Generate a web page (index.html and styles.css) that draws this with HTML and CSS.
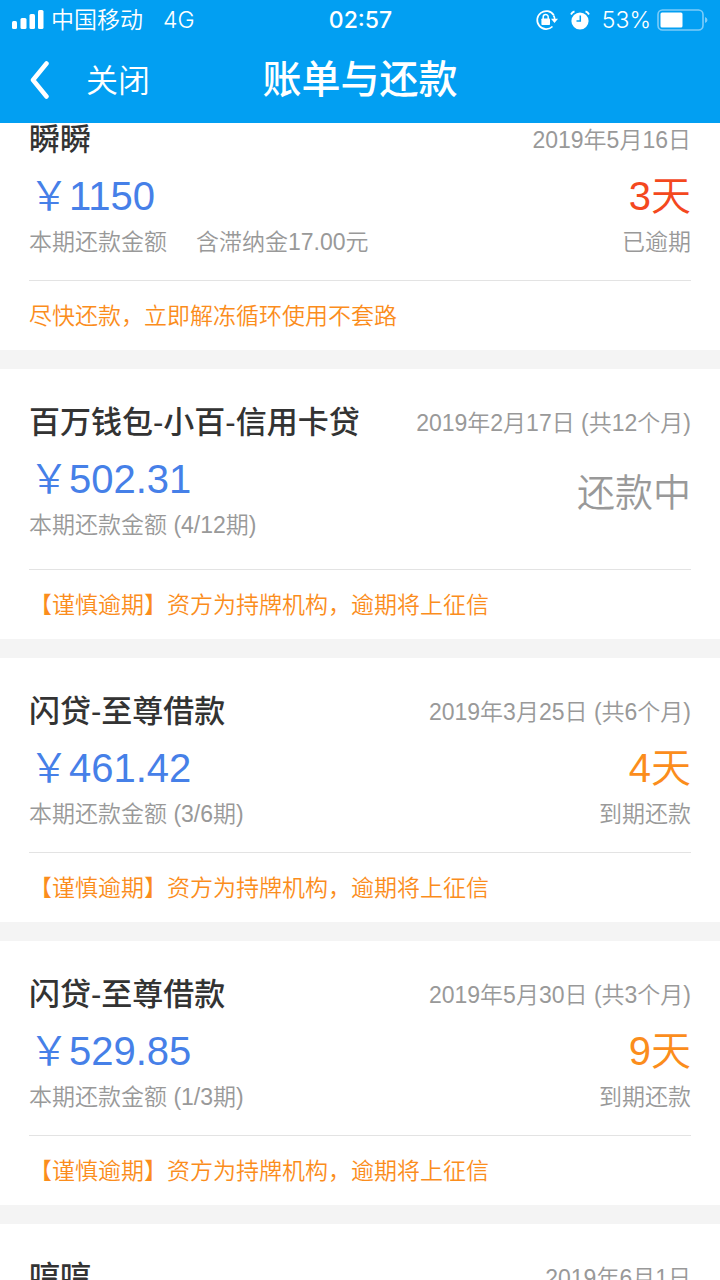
FILE: index.html
```html
<!DOCTYPE html>
<html lang="zh-CN">
<head>
  <meta charset="utf-8">
  <meta name="viewport" content="width=device-width, initial-scale=1">
  <title>账单与还款</title>
  <link rel="stylesheet" href="styles.css">
</head>
<body>
  <header class="header">
    <div class="status">
      <div class="status-left">
        <svg class="signal" viewBox="0 0 32 20" aria-hidden="true">
          <rect x="0" y="11" width="5" height="8" rx="1.5"/>
          <rect x="8.5" y="8" width="6" height="11" rx="1.5"/>
          <rect x="17.5" y="4" width="5.5" height="15" rx="1.5"/>
          <rect x="26" y="0" width="5.5" height="19" rx="1.5"/>
        </svg>
        <span class="carrier">中国移动</span>
        <span class="network">4G</span>
      </div>
      <time class="clock">02:57</time>
      <div class="status-right">
        <svg class="lock" viewBox="0 0 24 22" aria-hidden="true">
          <path d="M18.8 6.200A9 9 0 1 0 17.500 17.500" fill="none" stroke="#fff" stroke-width="1.700"/>
          <path d="M18.500 6.500Q20 8.500 19.700 11" fill="none" stroke="#fff" stroke-width="1.700"/>
          <path d="M16 9.800h7l-3.500 4.200z"/>
          <rect x="6.400" y="9.400" width="8.600" height="6.600" rx="0.800"/>
          <path d="M8.200 10V8a2.500 2.500 0 0 1 5 0v2" fill="none" stroke="#fff" stroke-width="1.500"/>
        </svg>
        <svg class="alarm" viewBox="0 0 20 20" aria-hidden="true">
          <circle cx="10" cy="11" r="8.600"/>
          <path d="M10.300 5.500v5.500H6.500" fill="none" stroke="#029ff2" stroke-width="1.500"/>
          <path d="M1 4.500A6 6 0 0 1 4.500 1.400M19 4.500A6 6 0 0 0 15.500 1.400" fill="none" stroke="#fff" stroke-width="1.800"/>
        </svg>
        <span class="percent">53%</span>
        <svg class="battery" viewBox="0 0 52 22" aria-hidden="true">
          <rect x="1" y="1" width="45" height="20" rx="4.500" fill="none" stroke="#7cccf9" stroke-width="1.600"/>
          <rect x="3.500" y="3.500" width="22" height="15" rx="1.500"/>
          <path d="M48 8v6q2.500-1 2.500-3T48 8z" fill="#7cccf9"/>
        </svg>
      </div>
    </div>
    <nav class="nav">
      <div class="nav-left">
        <button class="back" type="button" aria-label="返回">
          <svg viewBox="0 0 20 40" aria-hidden="true"><path d="M17.500 3.500 4 20l13.500 16.500" fill="none" stroke="#fff" stroke-width="4.500" stroke-linecap="round" stroke-linejoin="round"/></svg>
        </button>
        <button class="close" type="button">关闭</button>
      </div>
      <h1 class="title">账单与还款</h1>
    </nav>
  </header>

  <main class="bills">
    <article class="bill">
      <div class="head"><h2 class="name">瞬瞬</h2><time class="date">2019年5月16日</time></div>
      <div class="body">
        <div><p class="amount">￥1150</p><p class="caption">本期还款金额<span class="fee">含滞纳金17.00元</span></p></div>
        <div class="state"><p class="days late">3天</p><p class="caption">已逾期</p></div>
      </div>
      <p class="note">尽快还款，立即解冻循环使用不套路</p>
    </article>
    <article class="bill">
      <div class="head"><h2 class="name">百万钱包-小百-信用卡贷</h2><time class="date">2019年2月17日 (共12个月)</time></div>
      <div class="body ongoing">
        <div><p class="amount">￥502.31</p><p class="caption">本期还款金额 (4/12期)</p></div>
        <div class="state"><p class="progress">还款中</p></div>
      </div>
      <p class="note">【谨慎逾期】资方为持牌机构，逾期将上征信</p>
    </article>
    <article class="bill">
      <div class="head"><h2 class="name">闪贷-至尊借款</h2><time class="date">2019年3月25日 (共6个月)</time></div>
      <div class="body">
        <div><p class="amount">￥461.42</p><p class="caption">本期还款金额 (3/6期)</p></div>
        <div class="state"><p class="days">4天</p><p class="caption">到期还款</p></div>
      </div>
      <p class="note">【谨慎逾期】资方为持牌机构，逾期将上征信</p>
    </article>
    <article class="bill">
      <div class="head"><h2 class="name">闪贷-至尊借款</h2><time class="date">2019年5月30日 (共3个月)</time></div>
      <div class="body">
        <div><p class="amount">￥529.85</p><p class="caption">本期还款金额 (1/3期)</p></div>
        <div class="state"><p class="days">9天</p><p class="caption">到期还款</p></div>
      </div>
      <p class="note">【谨慎逾期】资方为持牌机构，逾期将上征信</p>
    </article>
    <article class="bill">
      <div class="head"><h2 class="name">哼哼</h2><time class="date">2019年6月1日</time></div>
    </article>
  </main>
</body>
</html>
```
FILE: styles.css
```css
* {
  box-sizing: border-box;
}

body {
  margin: 0;
  height: 100vh;
  overflow: hidden;
  background: #f4f4f4;
  font-family: "Liberation Sans", "Noto Sans CJK SC", sans-serif;
  font-size: 23px;
  font-weight: 350;
  color: #999;
}

h1, h2, p {
  margin: 0;
}

svg {
  display: block;
  fill: #fff;
}

button {
  padding: 0;
  border: 0;
  background: none;
  color: inherit;
  font: inherit;
}

.header {
  position: relative;
  z-index: 1;
  height: 123px;
  background: #029ff2;
  color: #fff;
}

.status {
  display: grid;
  grid-template-columns: 1fr auto 1fr;
  align-items: center;
  height: 40px;
  padding: 0 11px 0 12px;
  font-family: Inter, "Noto Sans CJK SC", sans-serif;
}

.status-left,
.status-right {
  display: flex;
  align-items: center;
  line-height: 40px;
}

.status-right {
  justify-content: flex-end;
}

.signal {
  width: 32px;
  height: 20px;
  margin-right: 7px;
}

.carrier {
  line-height: 36px;
}

.network {
  margin-left: 20px;
}

.clock {
  font-weight: 500;
}

.lock {
  width: 24px;
  height: 22px;
}

.alarm {
  width: 20px;
  height: 20px;
  margin: 0 12px 0 11px;
}

.percent {
  font-weight: 300;
}

.battery {
  width: 52px;
  height: 22px;
  margin-left: 6px;
}

.nav {
  display: grid;
  grid-template-columns: 1fr auto 1fr;
  align-items: center;
  height: 80px;
  padding: 0 29px;
}

.nav-left {
  display: flex;
  align-items: center;
  gap: 37px;
}

.back svg {
  width: 20px;
  height: 40px;
}

.close {
  padding-top: 2px;
  font-size: 32px;
  line-height: 40px;
}

.title {
  font-size: 39px;
  line-height: 48px;
  font-weight: 500;
}

.bills {
  display: flex;
  flex-direction: column;
  gap: 19px;
  margin-top: -37px;
}

.bill {
  padding: 34px 29px 0;
  background: #fff;
}

.head {
  display: flex;
  justify-content: space-between;
  align-items: center;
  line-height: 40px;
}

.name {
  font-size: 31px;
  font-weight: 500;
  color: #333;
}

.body {
  display: flex;
  justify-content: space-between;
  padding: 8px 0 20px;
  border-bottom: 1px solid #e3e3e3;
}

.ongoing {
  padding-bottom: 26px;
}

.state {
  text-align: right;
}

.amount {
  font-size: 40px;
  line-height: 56px;
  color: #4680e8;
}

.caption {
  line-height: 36px;
}

.fee {
  margin-left: 29px;
}

.days {
  font-size: 40px;
  line-height: 56px;
  color: #fb8d1c;
}

.late {
  color: #f4481e;
}

.progress {
  padding-top: 14px;
  font-size: 38px;
  line-height: 56px;
}

.note {
  padding-top: 2px;
  line-height: 67px;
  color: #fb8d1c;
}
```
